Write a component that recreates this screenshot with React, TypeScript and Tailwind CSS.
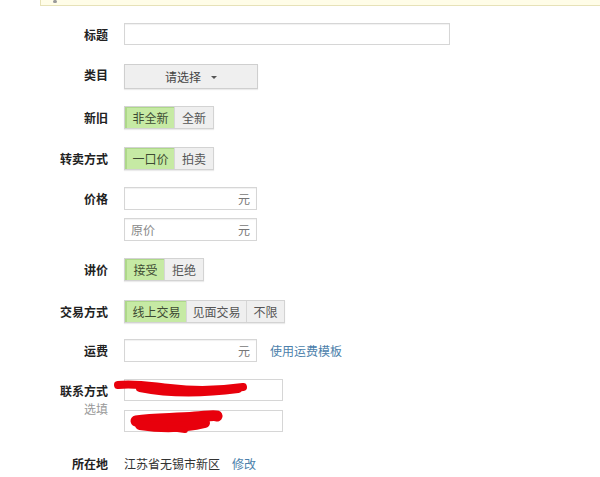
import React from 'react';

const font = { fontFamily: '"Noto Sans CJK SC", "Noto Sans", sans-serif' };

type Opt = { label: string; w: string };

function Segmented({ options, active = 0 }: { options: Opt[]; active?: number }) {
  return (
    <div className="flex h-[23px] border border-[#d3d3d3] shadow-[0_1px_1px_rgba(0,0,0,0.08)]">
      {options.map((o, i) => (
        <div
          key={o.label}
          className={
            'flex items-center justify-center text-[12px] leading-none ' +
            o.w +
            ' ' +
            (i === active
              ? 'bg-[#c6eaa4] text-[#3d4a33] border-l-2 border-t border-[#aed88a]'
              : 'bg-[#efefef] text-[#555] ' + (i > 0 ? 'border-l border-[#d6d6d6]' : ''))
          }
        >
          {o.label}
        </div>
      ))}
    </div>
  );
}

function Input({ w, unit, placeholder }: { w: string; unit?: string; placeholder?: string }) {
  return (
    <div
      className={
        'flex items-center justify-between h-[23px] border border-[#d6d6d6] bg-white px-[6px] text-[12px] shadow-[inset_0_1px_1px_rgba(0,0,0,0.06)] ' +
        w
      }
    >
      <span className="text-[#888]">{placeholder}</span>
      <span className="text-[#777]">{unit}</span>
    </div>
  );
}

function Row({ label, mt, children, sub }: { label?: string; mt: string; children: React.ReactNode; sub?: string }) {
  return (
    <div className={'flex items-start ' + mt}>
      <div className="w-[108px] shrink-0 text-right">
        <div className="h-[23px] flex items-center justify-end text-[12px] font-bold text-[#222]">{label}</div>
        {sub && <div className="text-[12px] text-[#999] leading-none mt-[1px]">{sub}</div>}
      </div>
      <div className="ml-4 flex flex-col">{children}</div>
    </div>
  );
}

export default function App() {
  return (
    <div className="relative w-[600px] h-[477px] bg-white overflow-hidden" style={font}>
      {/* 顶部提示条 */}
      <div className="ml-[40px] h-[6px] bg-[#fffde8] border-l border-b border-[#e7e2b8] relative">
        <div className="absolute left-[12px] top-0 w-[4px] h-[3px] rounded-full bg-[#999]" />
      </div>

      <Row label="标题" mt="mt-[17px]">
        <div className="h-[22px] w-[326px] border border-[#d6d6d6] bg-white shadow-[inset_0_1px_1px_rgba(0,0,0,0.06)]" />
      </Row>

      <Row label="类目" mt="mt-[17px]">
        <div className="h-[25px] w-[134px] mt-[1px] border border-[#cfcfcf] bg-[#efefef] flex items-center justify-center gap-[10px] text-[12px] text-[#444] shadow-[0_1px_1px_rgba(0,0,0,0.08)]">
          请选择
          <span className="w-0 h-0 border-l-[3px] border-r-[3px] border-t-[3px] border-l-transparent border-r-transparent border-t-[#555] mt-[1px]" />
        </div>
      </Row>

      <Row label="新旧" mt="mt-[17px]">
        <Segmented options={[{ label: '非全新', w: 'w-[49px]' }, { label: '全新', w: 'w-[39px]' }]} />
      </Row>

      <Row label="转卖方式" mt="mt-[18px]">
        <Segmented options={[{ label: '一口价', w: 'w-[49px]' }, { label: '拍卖', w: 'w-[39px]' }]} />
      </Row>

      <Row label="价格" mt="mt-[17px]">
        <Input w="w-[133px]" unit="元" />
        <div className="mt-[8px]">
          <Input w="w-[133px]" unit="元" placeholder="原价" />
        </div>
      </Row>

      <Row label="讲价" mt="mt-[17px]">
        <Segmented options={[{ label: '接受', w: 'w-[39px]' }, { label: '拒绝', w: 'w-[39px]' }]} />
      </Row>

      <Row label="交易方式" mt="mt-[19px]">
        <Segmented
          options={[
            { label: '线上交易', w: 'w-[61px]' },
            { label: '见面交易', w: 'w-[60px]' },
            { label: '不限', w: 'w-[38px]' },
          ]}
        />
      </Row>

      <Row label="运费" mt="mt-[16px]">
        <div className="flex items-center">
          <Input w="w-[133px]" unit="元" />
          <a className="ml-[13px] text-[12px] text-[#4b7fab]">使用运费模板</a>
        </div>
      </Row>

      <Row label="联系方式" mt="mt-[17px]" sub="选填">
        <div className="h-[22px] w-[159px] border border-[#d6d6d6] bg-white" />
        <div className="mt-[9px] h-[22px] w-[159px] border border-[#d6d6d6] bg-white" />
      </Row>

      <Row label="所在地" mt="mt-[20px]">
        <div className="h-[23px] flex items-center text-[12px] text-[#333]">
          江苏省无锡市新区
          <a className="ml-[12px] text-[#4b7fab]">修改</a>
        </div>
      </Row>

      {/* 涂抹遮挡 */}
      <svg className="absolute left-0 top-0 pointer-events-none" width="600" height="477">
        <g stroke="#e8000c" strokeLinecap="round" strokeLinejoin="round" fill="none">
          <path d="M118 385 C135 383 150 386 170 388 C195 391 222 390 243 387" strokeWidth="8" />
          <path d="M140 388 C165 393 200 394 238 389" strokeWidth="8" />
          <path d="M136 421 C155 418 175 419 195 417 C208 416 214 415 217 416" strokeWidth="11" />
          <path d="M140 425 C160 428 180 429 205 423" strokeWidth="10" />
          <path d="M170 428 L185 430" strokeWidth="6" />
        </g>
      </svg>
    </div>
  );
}
